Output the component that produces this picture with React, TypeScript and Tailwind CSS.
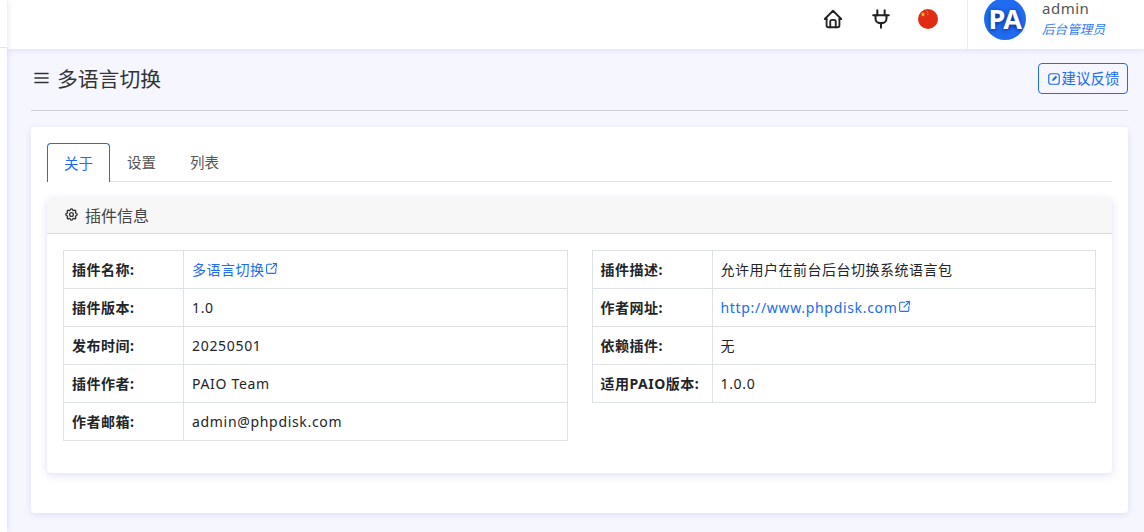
const leftRows = [
  { label: "插件名称:", value: "多语言切换", link: true },
  { label: "插件版本:", value: "1.0" },
  { label: "发布时间:", value: "20250501" },
  { label: "插件作者:", value: "PAIO Team" },
  { label: "作者邮箱:", value: "admin@phpdisk.com" },
];

const rightRows = [
  { label: "插件描述:", value: "允许用户在前台后台切换系统语言包" },
  { label: "作者网址:", value: "http://www.phpdisk.com", link: true },
  { label: "依赖插件:", value: "无" },
  { label: "适用PAIO版本:", value: "1.0.0" },
];

type Row = { label: string; value: string; link?: boolean };

function ExternalIcon() {
  return (
    <svg width="13" height="13" viewBox="0 0 24 24" fill="none" stroke="currentColor" strokeWidth="2" strokeLinecap="round" strokeLinejoin="round" className="mb-[3px] inline-block shrink-0">
      <path d="M12 4h-7a2 2 0 0 0 -2 2v13a2 2 0 0 0 2 2h13a2 2 0 0 0 2 -2v-7" />
      <path d="M11 13l10 -10" />
      <path d="M15 3h6v6" />
    </svg>
  );
}

function InfoTable({ rows }: { rows: Row[] }) {
  return (
    <div className="flex-1 self-start border-t border-l border-[#dee2e6]">
      {rows.map((row) => (
        <div key={row.label} className="flex h-[38px] border-b border-r border-[#dee2e6] text-[14px] text-[#212529]">
          <div className="flex w-[120px] shrink-0 items-center border-r border-[#dee2e6] pl-2 text-[14px] font-bold tracking-[0.5px]">
            {row.label}
          </div>
          <div className={/^[\x00-\x7f]+$/.test(row.value) ? "flex items-center pl-2 tracking-[0.68px]" : "flex items-center pl-2 tracking-[0.5px]"}>
            {row.link ? (
              <span className="flex items-center text-[#206bf0]">
                {row.value}
                <ExternalIcon />
              </span>
            ) : (
              row.value
            )}
          </div>
        </div>
      ))}
    </div>
  );
}

export default function App() {
  return (
    <div
      className="flex h-[532px] w-[1144px] overflow-hidden bg-[#f5f6ff] text-[#212529]"
      style={{ fontFamily: '"Noto Sans", "Noto Sans CJK SC", sans-serif' }}
    >
      {/* collapsed sidebar */}
      <div className="z-20 w-[7px] shrink-0 bg-white shadow-[0_0_6px_rgba(90,90,220,0.2)]">
        <div className="h-[48px] border-b border-[#e4e4e4]" />
      </div>

      <div className="flex min-w-0 flex-1 flex-col">
        {/* top bar */}
        <div className="z-10 flex h-[49px] shrink-0 items-center justify-end bg-white shadow-[0_1px_6px_rgba(90,90,220,0.15)]">
          <svg width="22" height="22" viewBox="0 0 24 24" fill="none" stroke="#222" strokeWidth="2" strokeLinecap="round" strokeLinejoin="round" className="mb-[11px]">
            <path d="M5 12l-2 0l9 -9l9 9l-2 0" />
            <path d="M5 12v7a2 2 0 0 0 2 2h10a2 2 0 0 0 2 -2v-7" />
            <path d="M9 21v-6a2 2 0 0 1 2 -2h2a2 2 0 0 1 2 2v6" />
          </svg>
          <svg width="22" height="22" viewBox="0 0 24 24" fill="none" stroke="#222" strokeWidth="2.2" strokeLinecap="round" strokeLinejoin="round" className="mb-[11px] ml-[26px]">
            <path d="M8 2.500v5.500M16 2.500v5.500" />
            <path d="M3.500 8h17" />
            <path d="M6 8v3.500a5 5 0 0 0 5 5h2a5 5 0 0 0 5-5V8" />
            <path d="M12 16.500v5" />
          </svg>
          <svg width="20" height="20" viewBox="0 0 20 20" className="mb-[11px] ml-[26px]">
            <circle cx="10" cy="10" r="10" fill="#e02c14" />
            <path d="M5 2.800l.6 1.700 1.800.1-1.400 1.100.5 1.700-1.500-1-1.500 1 .5-1.700-1.400-1.100 1.800-.1z" fill="#f7c92b" />
            <circle cx="8.800" cy="2.300" r=".5" fill="#f7c92b" />
            <circle cx="9.800" cy="3.800" r=".5" fill="#f7c92b" />
            <circle cx="9.800" cy="5.600" r=".5" fill="#f7c92b" />
          </svg>
          <div className="ml-[29px] h-full border-l border-[#ececec]" />
          <div className="mb-[11px] ml-[16px] flex h-[42px] w-[42px] items-center justify-center rounded-full bg-[#206bf0] text-[27px] font-bold tracking-[-0.5px] text-white [text-shadow:0_1px_4px_rgba(0,20,100,0.8)]">
            PA
          </div>
          <div className="mb-[11px] ml-[16px] mr-[39px] w-[63px]">
            <div className="text-[15px] leading-[17px] tracking-[0.5px] text-[#555]">admin</div>
            <div className="mt-[5px] text-[12.6px] leading-[16px] italic text-[#2f7bf5]">后台管理员</div>
          </div>
        </div>

        {/* page */}
        <div className="flex-1 pl-[24px] pr-[16px]">
          <div className="flex h-[62px] items-center justify-between border-b border-[#cfd0d6] pb-[2px]">
            <div className="flex items-center pt-[3px]">
              <svg width="18" height="18" viewBox="0 0 18 18" fill="none" stroke="#333" strokeWidth="1.600" strokeLinecap="round" className="mb-[5px] ml-[1px]">
                <path d="M3 4.500h13M3 9h13M3 13.500h13" />
              </svg>
              <h1 className="ml-[7px] text-[20.8px] font-normal text-[#333]">多语言切换</h1>
            </div>
            <button className="flex h-[31px] w-[90px] items-center justify-center rounded-[4px] border border-[#206bf0] text-[14.5px] text-[#206bf0]">
              <svg width="14" height="14" viewBox="0 0 24 24" fill="none" stroke="currentColor" strokeWidth="2" strokeLinecap="round" strokeLinejoin="round" className="mr-[1px]">
                <rect x="3" y="3" width="18" height="18" rx="4" />
                <path d="M8.500 15.500l1-3.500 5.500-5.500 2.500 2.500-5.500 5.500z" fill="currentColor" stroke="none" />
              </svg>
              建议反馈
            </button>
          </div>

          <div className="mt-[16px] h-[386px] rounded-[4px] bg-white px-[16px] pt-[16px] shadow-[0_2px_6px_rgba(90,90,220,0.15)]">
            {/* tabs */}
            <div className="flex h-[39px] border-b border-[#dee2e6] text-[14.5px]">
              <div className="mb-[-1px] flex w-[63px] items-center justify-center rounded-t-[4px] border border-b-0 border-[#206bf0] bg-white pt-[1px] text-[#206bf0]">
                关于
              </div>
              <div className="flex w-[63px] items-center justify-center pt-[1px] text-[#555]">设置</div>
              <div className="flex w-[63px] items-center justify-center pt-[1px] text-[#555]">列表</div>
            </div>

            <div className="mt-[16px] h-[275px] rounded-[4px] bg-white shadow-[0_2px_8px_rgba(90,90,220,0.2)]">
              <div className="flex h-[36px] items-center rounded-t-[4px] border-b border-[#dcdcdc] bg-[#f7f7f7] pl-[17px] text-[16px] text-[#444]">
                <svg width="15" height="15" viewBox="0 0 24 24" fill="none" stroke="#333" strokeWidth="2.200" strokeLinecap="round" strokeLinejoin="round" className="mr-[6px] mb-[2px]">
                  <path d="M10.325 4.317c.426-1.756 2.924-1.756 3.35 0a1.724 1.724 0 0 0 2.573 1.066c1.543-.94 3.31.826 2.37 2.370a1.724 1.724 0 0 0 1.065 2.572c1.756.426 1.756 2.924 0 3.350a1.724 1.724 0 0 0-1.066 2.573c.94 1.543-.826 3.310-2.370 2.370a1.724 1.724 0 0 0-2.572 1.065c-.426 1.756-2.924 1.756-3.350 0a1.724 1.724 0 0 0-2.573-1.066c-1.543.94-3.310-.826-2.370-2.370a1.724 1.724 0 0 0-1.065-2.572c-1.756-.426-1.756-2.924 0-3.350a1.724 1.724 0 0 0 1.066-2.573c-.94-1.543.826-3.310 2.370-2.370 1 .608 2.296.07 2.572-1.065z" />
                  <circle cx="12" cy="12" r="3" />
                </svg>
                插件信息
              </div>
              <div className="flex gap-[24px] px-[16px] pt-[16px]">
                <InfoTable rows={leftRows} />
                <InfoTable rows={rightRows} />
              </div>
            </div>
          </div>
        </div>
      </div>
    </div>
  );
}
